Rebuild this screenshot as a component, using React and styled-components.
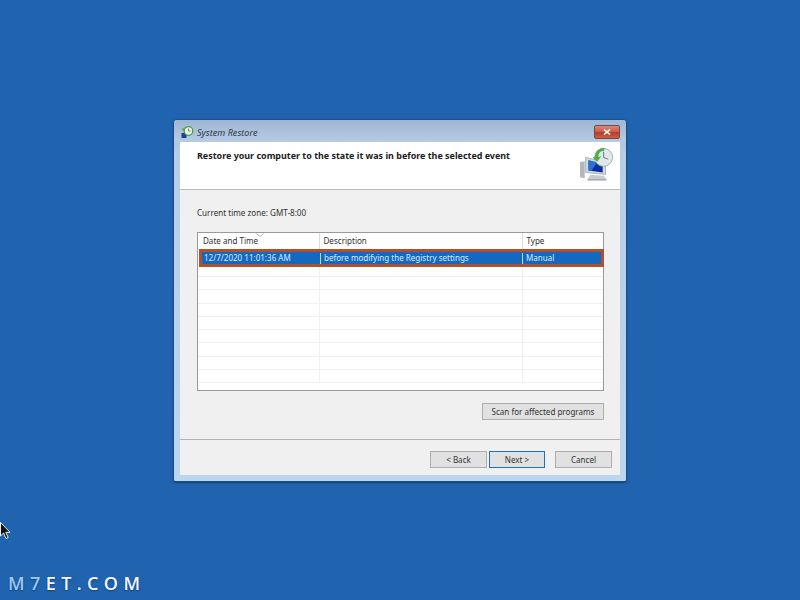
import React from "react";
import styled, { createGlobalStyle } from "styled-components";

const Global = createGlobalStyle`
  html, body { margin: 0; padding: 0; }
  body { width: 800px; height: 600px; overflow: hidden; background: #2064b0; font-family: "Noto Sans", "Open Sans", sans-serif; }
`;
const Desktop = styled.div`
  position: relative; width: 800px; height: 600px; box-sizing: border-box;
  padding: 119px 0 0 173px; background: #2064b0;
`;
const Win = styled.div`
  width: 454px; height: 363px; box-sizing: border-box; display: flex; flex-direction: column;
  border: 1px solid #1a4f8e; border-radius: 4px 4px 2px 2px;
  padding: 0 6px 6px; box-shadow: 0 1px 2px rgba(10,40,90,.6);
  background: linear-gradient(180deg, #a4bdd8 0%, #b6cde6 10%, #b9d2ec 60%, #bcd6f0 100%);
`;
const TitleBar = styled.div`
  height: 22px; flex: none; display: flex; align-items: center; justify-content: space-between;
  margin: 0 -6px; padding: 3px 6px 0 7px; box-sizing: border-box;
  border-radius: 3px 3px 0 0; background: linear-gradient(180deg, #9db6d2, #b7cce3);
`;
const TitleLeft = styled.div`display: flex; align-items: center; gap: 3px;`;
const TitleText = styled.span`font: italic 400 9.1px "Noto Sans", sans-serif; color: #2c3a48;`;
const Close = styled.div`
  width: 26px; height: 14px; margin-top: -2px; display: flex; align-items: center; justify-content: center;
  border: 1px solid #7a4a40; border-radius: 2px; box-sizing: border-box;
  background: linear-gradient(180deg, #d98a7a 0%, #c95a48 50%, #b83c2a 55%, #c8604a 100%);
`;
const Client = styled.div`flex: 1; display: flex; flex-direction: column; background: #f0f0f0; min-height: 0;`;
const Header = styled.div`
  height: 48px; flex: none; box-sizing: border-box; background: #fff; border-bottom: 1px solid #bcbcbc;
  padding: 8px 0 0 17px; display: flex; justify-content: space-between;
`;
const Heading = styled.div`font: 700 8.95px/12px "Noto Sans", sans-serif; color: #1a1a1a;`;
const HeaderIcon = styled.div`margin: -3px 6px 0 0; width: 34px; height: 34px;`;
const Body = styled.div`flex: 1; box-sizing: border-box; padding: 17px 16px 0 17px; display: flex; flex-direction: column;`;
const Zone = styled.div`font: 400 8.1px/11px "Noto Sans", sans-serif; color: #303030;`;
const ListBox = styled.div`
  margin-top: 14px; height: 159px; box-sizing: border-box; background: #fff; border: 1px solid #9a9a9a;
  display: flex; flex-direction: column; position: relative;
`;
const Row = styled.div`
  display: grid; grid-template-columns: 122px 203px 1fr; height: ${p => p.$h}px; flex: none; box-sizing: border-box;
  border-bottom: 1px solid #f1f1f1;
`;
const HeadRow = styled(Row)`border-bottom: none;`;
const Cell = styled.div`
  border-right: 1px solid #f0f0f0; font: 400 8.05px/16px "Noto Sans", sans-serif; color: #303030;
  white-space: nowrap; overflow: hidden;
  &:last-child { border-right: none; }
`;
const HeadCell = styled(Cell)`
  padding-left: 3.5px; border-right-color: #dcdcdc;
  &:first-child { padding-left: 5px; }
`;
const Sort = styled.svg`position: absolute; left: 58px; top: 0; `;
const SelectedRow = styled.div`
  display: grid; grid-template-columns: 118px 202px 1fr; height: 18px; flex: none; box-sizing: border-box;
  margin: 0 -1px 0 1px; border: 3px solid #b0502e; background: #1468c0;
`;
const SelCell = styled.div`
  padding-left: 2px; font: 400 8.05px/12px "Noto Sans", sans-serif; color: #d8ecff; white-space: nowrap; overflow: hidden;
  & + & { border-left: 1px solid #bcd8f2; padding-left: 3px; height: 11px; margin-top: 1px; line-height: 10px; }
`;
const ScanRow = styled.div`display: flex; justify-content: flex-end; margin-top: 12px;`;
const Btn = styled.div`
  height: 17px; box-sizing: border-box; width: ${p => p.$w}px; display: flex; align-items: center; justify-content: center;
  background: #e1e1e1; border: 1px solid ${p => p.$primary ? "#2a6fa8" : "#adadad"};
  ${p => p.$primary ? "box-shadow: inset 0 0 0 1px #cfe6f8;" : ""}
  font: 400 8.05px "Noto Sans", sans-serif; color: #333;
`;
const Footer = styled.div`
  height: 36px; flex: none; margin-top: auto; box-sizing: border-box; border-top: 1px solid #b4b4b4;
  padding-top: 11px; padding-right: 8px; display: flex; justify-content: flex-end; align-items: flex-start;
`;
const NavGroup = styled.div`display: flex; gap: 2px; margin-right: 10px;`;
const Watermark = styled.div`
  position: absolute; left: 8px; top: 572px; font: 600 18px/22px "Open Sans", sans-serif; letter-spacing: 5.4px;
  color: #f2f6fb; text-shadow: 0 1px 2px rgba(0,30,70,.5);
`;
const Accent = styled.span`color: #9cc8ee;`;
const Cursor = styled.svg`position: absolute; left: 0; top: 522px;`;

const SmallIcon = () => (
  <svg width="13" height="13" viewBox="0 0 13 13">
    <rect x="0.5" y="7" width="5" height="5" fill="#1c3f8f" />
    <circle cx="7.5" cy="5" r="4.3" fill="#e8f2e6" stroke="#4e9a48" strokeWidth="1.3" />
    <path d="M7.5 2.5V5H9.6" fill="none" stroke="#5a6a70" strokeWidth=".8" />
    <path d="M0.5 3.5L4 1.2V6Z" fill="#5aa84e" />
  </svg>
);
const BigIcon = () => (
  <svg width="34" height="34" viewBox="0 0 36 36">
    <path d="M0 16l5-1v18l-5-1z" fill="#b4b8bd" />
    <path d="M6 11L27 16V29L6 27Z" fill="#d4dade" stroke="#8d979f" strokeWidth=".7" />
    <path d="M9 14L24 18V27L9 25Z" fill="#0b2f9e" />
    <path d="M9 14L18 16.5L12 25.4L9 25Z" fill="#2c6fd6" />
    <path d="M11 29.5L25 30.5L28 34H8Z" fill="#c8cdd2" />
    <path d="M8 34H28V35.5H8Z" fill="#9aa2a8" />
    <circle cx="25" cy="11" r="9.5" fill="#dfe8ea" stroke="#9bb0b4" strokeWidth="1" />
    <path d="M25 5V11L30 13" fill="none" stroke="#60767e" strokeWidth="1" />
    <path d="M16 10C16 4 21 1 26 1.2L25.5 4C21.5 4 19.5 7 19.5 10.5L22.5 10L18 15.5L13.5 11Z" fill="#52ae44" />
  </svg>
);

const rowHeights = [10, 13.3, 13.3, 13.3, 13.3, 13.3, 13.3, 13.3, 13.3];

export default function App() {
  return (
    <>
      <Global />
      <Desktop>
        <Win>
          <TitleBar>
            <TitleLeft><SmallIcon /><TitleText>System Restore</TitleText></TitleLeft>
            <Close>
              <svg width="8" height="6" viewBox="0 0 8 6"><path d="M1 .5L7 5.5M7 .5L1 5.5" stroke="#fff" strokeWidth="1.6" /></svg>
            </Close>
          </TitleBar>
          <Client>
            <Header>
              <Heading>Restore your computer to the state it was in before the selected event</Heading>
              <HeaderIcon><BigIcon /></HeaderIcon>
            </Header>
            <Body>
              <Zone>Current time zone: GMT-8:00</Zone>
              <ListBox>
                <Sort width="8" height="4" viewBox="0 0 8 4"><path d="M.5.5L4 3.5L7.5.5" fill="none" stroke="#9a9a9a" strokeWidth=".8" /></Sort>
                <HeadRow $h={16}>
                  <HeadCell>Date and Time</HeadCell>
                  <HeadCell>Description</HeadCell>
                  <HeadCell>Type</HeadCell>
                </HeadRow>
                <SelectedRow>
                  <SelCell>12/7/2020 11:01:36 AM</SelCell>
                  <SelCell>before modifying the Registry settings</SelCell>
                  <SelCell>Manual</SelCell>
                </SelectedRow>
                {rowHeights.map((h, i) => (
                  <Row key={i} $h={h}><Cell /><Cell /><Cell /></Row>
                ))}
              </ListBox>
              <ScanRow><Btn $w={122}>Scan for affected programs</Btn></ScanRow>
            </Body>
            <Footer>
              <NavGroup>
                <Btn $w={57}>&lt; Back</Btn>
                <Btn $w={56} $primary>Next &gt;</Btn>
              </NavGroup>
              <Btn $w={57}>Cancel</Btn>
            </Footer>
          </Client>
        </Win>
        <Cursor width="11" height="18" viewBox="0 0 11 18">
          <path d="M.5.5V14L3.6 11L6 16.5L8.2 15.5L5.8 10.3H10Z" fill="#111" stroke="#fff" strokeWidth=".9" />
        </Cursor>
        <Watermark><Accent>M7</Accent>ET.COM</Watermark>
      </Desktop>
    </>
  );
}
